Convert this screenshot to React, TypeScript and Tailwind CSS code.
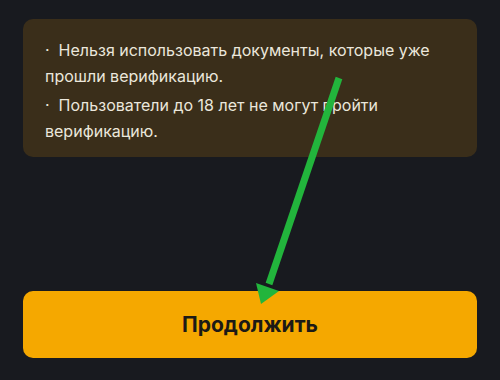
import React from "react";

export default function App() {
  return (
    <div
      className="relative w-[500px] h-[380px] bg-[#181a1f] overflow-hidden"
      style={{ fontFamily: "Inter, 'Noto Sans', sans-serif" }}
    >
      <div className="px-[23px] pt-[19px]">
        <div className="rounded-[10px] bg-[#3a2e1a] h-[138px] pl-[22px] pt-[18px] text-[16px] leading-[26px] text-[#ebe7dc] whitespace-nowrap">
          <p>·&nbsp;&nbsp;Нельзя использовать документы, которые уже<br />прошли верификацию.</p>
          <p className="mt-[3px]">·&nbsp;&nbsp;Пользователи до 18 лет не могут пройти<br />верификацию.</p>
        </div>
        <button className="mt-[134px] w-full h-[67px] rounded-[10px] bg-[#f5a800] text-[21px] font-bold text-[#1c1a16] flex items-center justify-center">
          Продолжить
        </button>
      </div>
      <svg className="absolute left-0 top-0" width="500" height="380" viewBox="0 0 500 380">
        <line x1="339" y1="78" x2="269" y2="284" stroke="#22b53c" strokeWidth="7" />
        <polygon points="256,283 279,291 261,304" fill="#22b53c" />
      </svg>
    </div>
  );
}
